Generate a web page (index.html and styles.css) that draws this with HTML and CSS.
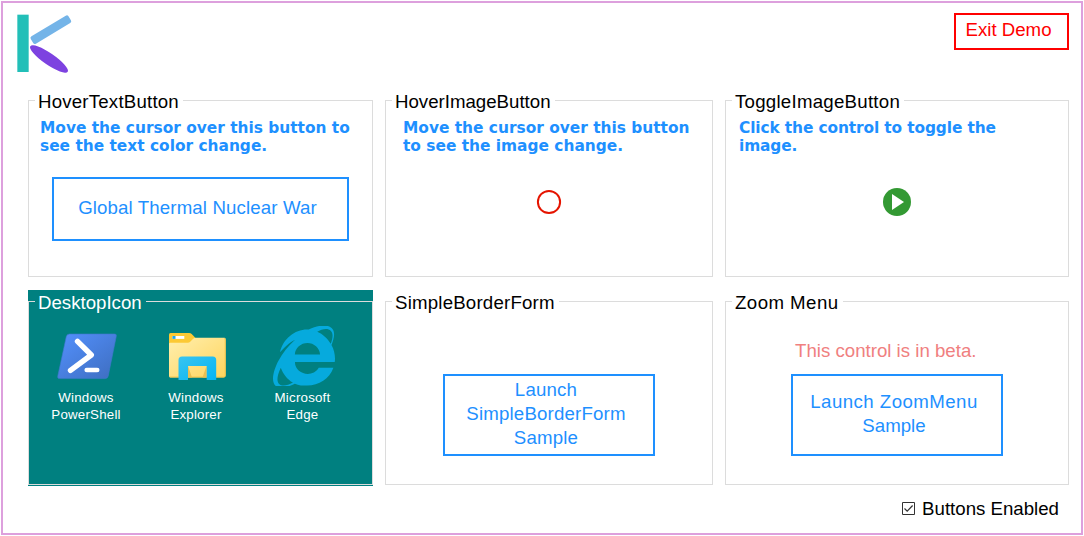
FILE: index.html
```html
<!DOCTYPE html>
<html lang="en">
<head>
<meta charset="utf-8">
<title>Controls Demo</title>
<link rel="stylesheet" href="styles.css">
</head>
<body>
<main class="window">
  <header class="header">
    <svg class="logo" viewBox="0 0 180 180" aria-label="K">
      <rect x="1" y="2" width="34" height="172" fill="#22bfb8"/>
      <rect x="35.500" y="34" width="132" height="26" rx="6" fill="#74b4e8" transform="rotate(-31 101.500 47)"/>
      <ellipse cx="96" cy="135" rx="68" ry="17.500" fill="#7d42e0" transform="rotate(34.500 96 135)"/>
    </svg>
    <button class="btn btn-exit">Exit Demo</button>
  </header>

  <div class="groups">
    <section class="group">
      <div class="frame">
        <h2 class="title t-hovertext">HoverTextButton</h2>
        <p class="hint">Move the cursor over this button to<br>see the text color change.</p>
        <button class="btn btn-war">Global Thermal Nuclear War</button>
      </div>
    </section>

    <section class="group">
      <div class="frame">
        <h2 class="title t-hoverimage">HoverImageButton</h2>
        <p class="hint hint-image">Move the cursor over this button<br>to see the image change.</p>
        <svg class="circle" viewBox="0 0 28 28"><circle cx="14" cy="14" r="11.100" fill="none" stroke="#e51400" stroke-width="2"/></svg>
      </div>
    </section>

    <section class="group">
      <div class="frame">
        <h2 class="title t-toggle">ToggleImageButton</h2>
        <p class="hint hint-toggle">Click the control to toggle the<br>image.</p>
        <svg class="play" viewBox="0 0 28 28"><circle cx="14" cy="14" r="14" fill="#339933"/><path d="M9 6v16l12-8z" fill="#fff"/></svg>
      </div>
    </section>

    <section class="group group-desktop">
      <div class="frame">
        <h2 class="title t-desktop">DesktopIcon</h2>
        <div class="icons">
          <div class="icon icon-ps">
            <svg class="glyph" viewBox="-1.500 0 62 60">
              <defs><linearGradient id="ps" x1="0" y1="0" x2="1" y2="1"><stop offset="0" stop-color="#5391fe"/><stop offset="1" stop-color="#3e6dbf"/></linearGradient></defs>
              <path d="M13 8h45q2.300 0 1.800 2.200L51.700 50q-.6 2.600-3.200 2.600H3.200q-2.500 0-1.900-2.600L9.800 10.600Q10.400 8 13 8z" fill="url(#ps)" stroke="#3f77cf" stroke-width=".6"/>
              <path d="M21 15.300 34.800 29 14 44.300" fill="none" stroke="#fff" stroke-width="5.400" stroke-linecap="round" stroke-linejoin="round"/>
              <path d="M30.200 44h10.500" stroke="#fff" stroke-width="4.600" stroke-linecap="round"/>
            </svg>
            <span class="label">Windows<br>PowerShell</span>
          </div>
          <div class="icon icon-explorer">
            <svg class="glyph" viewBox="0 0 62 60">
              <defs><linearGradient id="fold" x1="0" y1="0" x2="1" y2="1"><stop offset="0" stop-color="#ffefae"/><stop offset="1" stop-color="#ffd45c"/></linearGradient>
              <linearGradient id="tray" x1="0" y1="0" x2="1" y2="1"><stop offset="0" stop-color="#38c4f0"/><stop offset="1" stop-color="#05b5f4"/></linearGradient></defs>
              <path d="M4 8.500Q4 7 5.500 7h18.700q1.400 0 2.500 1.100L31 12.500 24 20H4z" fill="#fcc934"/>
              <path d="M7.500 10h11.800v2.900H7.500z" fill="#fff"/><path d="M7.500 10h3v2.900h-3z" fill="#22a5ea"/>
              <path d="M4 18q0-1.200 1.200-1.200h17.700q1.300 0 2.300-1l3-3q1-1 2.400-1h28.700q1.400 0 1.400 1.400V49.500q0 2-2 2H5.500q-1.500 0-1.500-1.500z" fill="url(#fold)"/>
              <path d="M59 12.500q1.200 0 1.200 1.200V49.500q0 1.500-1.500 1.500H5" fill="none" stroke="#f6c447" stroke-width=".9"/>
              <path d="M23 40l4 11.500h-4zM41.500 40l-4 11.500h4z" fill="#eabf52"/>
              <path d="M13.500 54V34q0-3.500 3.500-3.500h30.700q3.500 0 3.500 3.500v20h-9.500V40H23v14z" fill="url(#tray)"/>
            </svg>
            <span class="label">Windows<br>Explorer</span>
          </div>
          <div class="icon icon-edge">
            <svg class="glyph" viewBox="0 4 512 494" preserveAspectRatio="none">
              <path fill="#06aadd" d="M483.049 159.706c10.855-24.575 21.424-60.438 21.424-87.871 0-72.722-79.641-98.371-209.673-38.577-107.632-7.181-211.221 73.670-237.098 186.457 30.852-34.862 78.271-82.298 121.977-101.158C125.404 166.850 79.128 228.002 43.992 291.725 23.246 329.651 0 390.940 0 436.747c0 98.575 92.854 86.500 180.251 42.006 31.423 15.430 66.559 15.573 101.695 15.573 97.124 0 184.249-54.294 216.814-146.022H377.927c-52.509 88.593-196.819 52.996-196.819-47.436H509.900c6.407-43.581-1.655-95.715-26.851-141.162zM64.559 346.877c17.711 51.150 53.703 95.871 100.266 123.304-88.741 48.940-173.267 29.096-100.266-123.304zm115.977-108.873c2-55.152 50.276-94.871 103.980-94.871 53.418 0 101.981 39.719 103.981 94.871H180.536zm184.536-187.600c21.425-10.287 48.563-22.003 72.558-22.003 31.422 0 54.274 21.717 54.274 53.722 0 20.003-7.427 49.007-14.569 67.867-26.280-42.292-65.986-81.584-112.263-99.586z"/>
            </svg>
            <span class="label">Microsoft<br>Edge</span>
          </div>
        </div>
      </div>
    </section>

    <section class="group">
      <div class="frame">
        <h2 class="title t-border">SimpleBorderForm</h2>
        <button class="btn btn-launch btn-border">Launch<br>SimpleBorderForm<br>Sample</button>
      </div>
    </section>

    <section class="group">
      <div class="frame">
        <h2 class="title t-zoom">Zoom Menu</h2>
        <p class="beta">This control is in beta.</p>
        <button class="btn btn-launch btn-zoom"><span class="wide">Launch ZoomMenu</span><br>Sample</button>
      </div>
    </section>
  </div>

  <footer class="footer">
    <svg class="check" viewBox="0 0 13 13"><path d="M.5.5h12v12H.5z" fill="#fff" stroke="#333"/><path d="M2.500 6.500l2.700 2.700L10.600 3.500" fill="none" stroke="#333" stroke-width="1.200"/></svg>
    <span class="check-label">Buttons Enabled</span>
  </footer>
</main>
</body>
</html>
```
FILE: styles.css
```css
* { box-sizing: border-box; margin: 0; }

body {
  background: #fff;
  font: 18.67px/24px "Liberation Sans", Arial, sans-serif;
  color: #000;
  padding: 1px;
  white-space: nowrap;
}

.window {
  width: 1082px;
  height: 534px;
  border: 2px solid #dda0dd;
}

.header {
  height: 86px;
  padding: 10px 12px 0 14px;
  display: flex;
  justify-content: space-between;
  align-items: flex-start;
}

.logo { width: 60px; height: 60px; margin-top: 1px; }

.btn {
  display: block;
  border: 2px solid #1e90ff;
  background: #fff;
  color: #1e90ff;
  font: inherit;
  text-align: center;
}

.btn-exit {
  width: 115px;
  height: 37px;
  padding: 0 6px 4px 0;
  border-color: #f00;
  color: #f00;
}

.groups {
  margin-left: 25px;
  display: grid;
  grid-template-columns: 345px 328px 344px;
  grid-template-rows: 188px 196px;
  column-gap: 12px;
  row-gap: 13px;
}

.group { padding-top: 11px; }
.frame { height: 177px; border: 1px solid #dcdcdc; }
.group:nth-child(n+4) .frame { height: 184px; }
.group-desktop { background: #008080; color: #fff; }

.title {
  width: max-content;
  height: 22px;
  margin: -10px 0 0 6px;
  padding: 0 4px 0 3px;
  background: #fff;
  font-size: 18.67px;
  font-weight: normal;
  line-height: 22px;
}

.t-desktop { background: #008080; }
.t-hovertext, .t-border { letter-spacing: .2px; }
.t-toggle { letter-spacing: .25px; }
.t-zoom { letter-spacing: .45px; }

.hint {
  margin: 6px 0 0 11px;
  color: #1e90ff;
  font: bold 15.4px/18px "DejaVu Sans", Verdana, sans-serif;
}

.hint-image { margin-left: 17px; }
.hint-toggle { margin-left: 13px; letter-spacing: -.12px; }

.btn-war {
  width: 297px;
  height: 64px;
  margin: 22px 0 0 23px;
  padding: 0 6px 3px 0;
  letter-spacing: .13px;
}

.circle, .play { display: block; width: 28px; height: 28px; }
.circle { margin: 33px 0 0 149px; }
.play { margin: 33px 0 0 157px; }

.icons { display: flex; margin: 12px 0 0 24px; }
.icon { width: 62px; display: flex; flex-direction: column; align-items: center; }
.icon-ps { margin-left: 2px; }
.icon-explorer { margin-left: 48px; }
.icon-edge { margin-left: 46px; }
.icon-edge .label { margin-right: 3px; }
.glyph { width: 62px; height: 60px; }

.label {
  margin-top: 3px;
  font-size: 13.33px;
  line-height: 17px;
  text-align: center;
  letter-spacing: .2px;
}

.btn-launch { width: 212px; height: 82px; padding: 0 6px 3px 0; }
.btn-border { margin: 60px 0 0 57px; letter-spacing: .18px; }
.btn-zoom { margin: 11px 0 0 65px; }
.wide { letter-spacing: .45px; }

.beta { margin: 25px 0 0 69px; color: #f08080; }

.footer {
  display: flex;
  justify-content: flex-end;
  align-items: center;
  height: 24px;
  margin-top: 11px;
  padding-right: 22px;
}

.check { width: 13px; height: 13px; margin: 0 7px 2px 0; }
```
